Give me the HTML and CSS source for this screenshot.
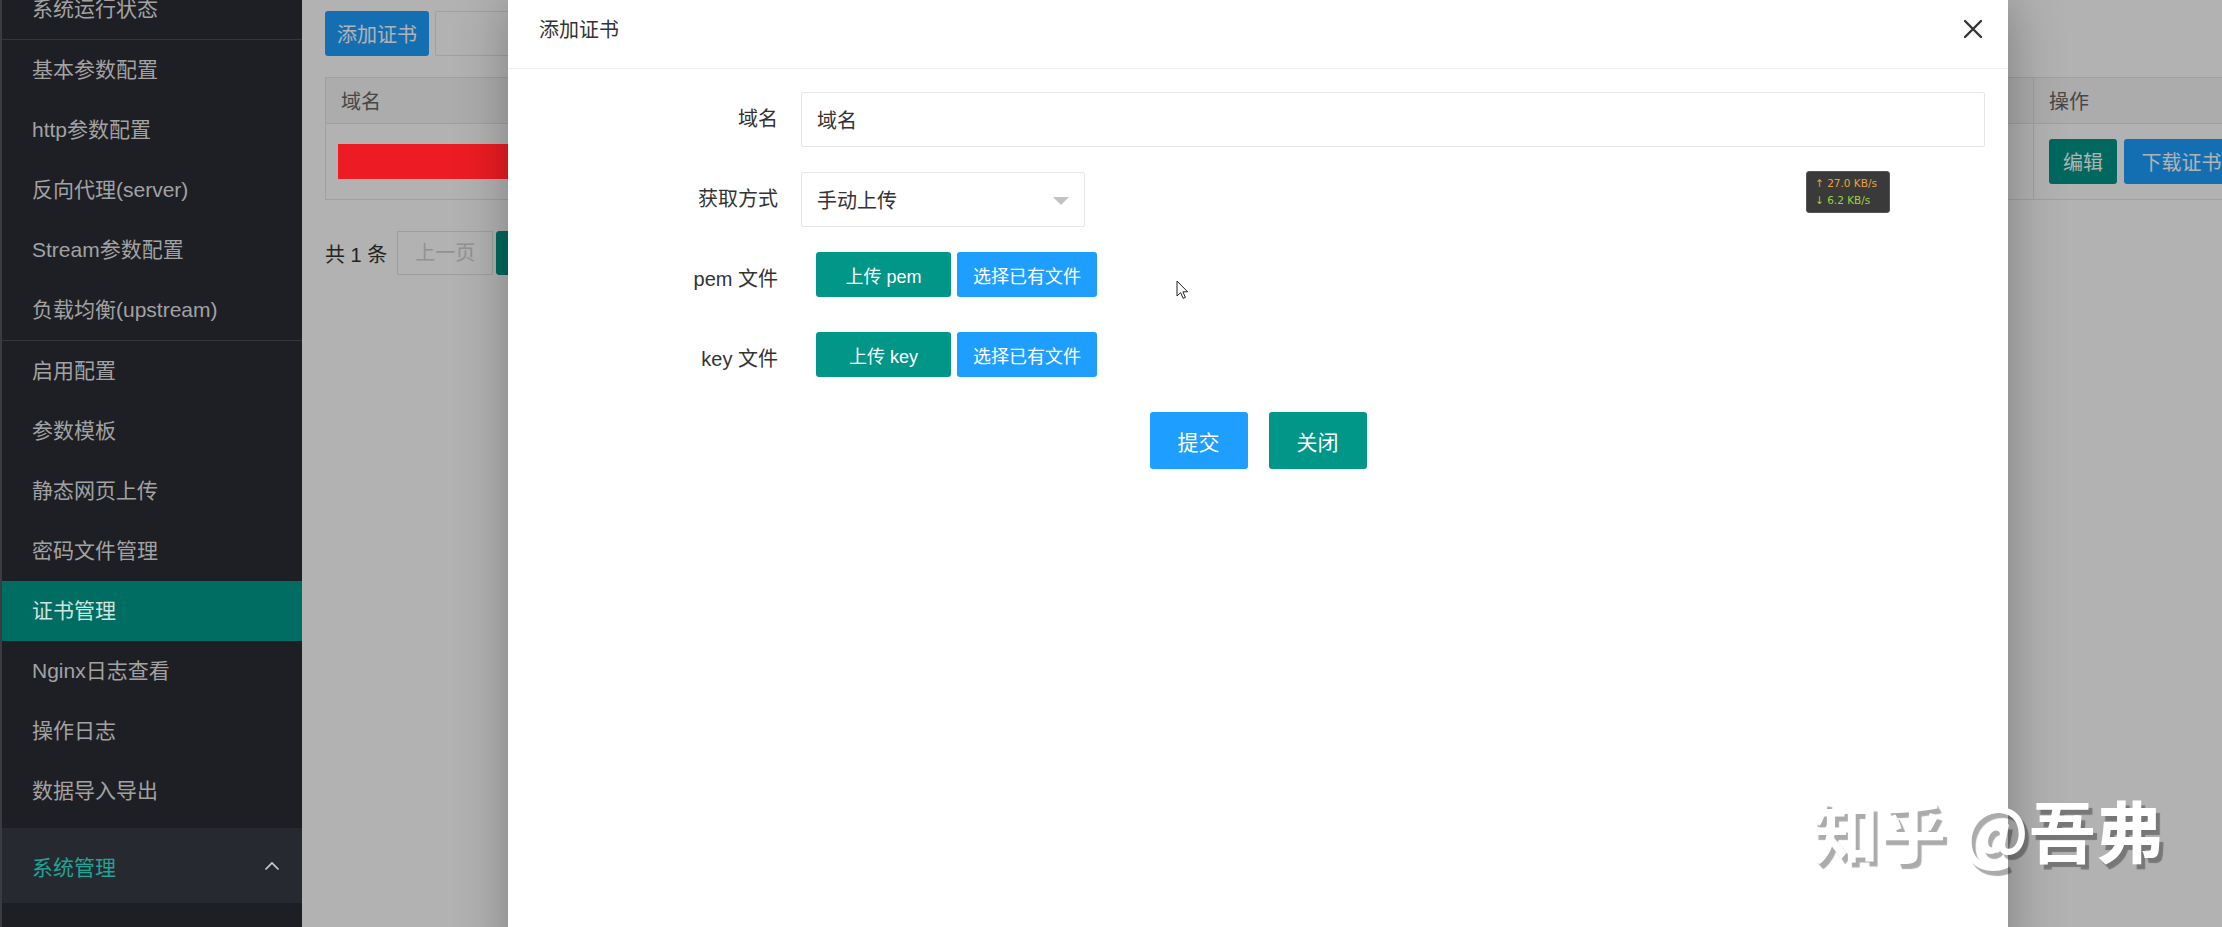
FILE: index.html
```html
<!DOCTYPE html>
<html lang="zh-CN">
<head>
  <meta charset="UTF-8">
  <meta name="viewport" content="width=device-width, initial-scale=1">
  <title>证书管理</title>
  <link rel="stylesheet" href="styles.css">
</head>
<body>

  <!-- 左侧菜单 -->
  <aside class="sidebar">
    <ul class="menu menu-top">
      <li><a href="#">系统运行状态</a></li>
    </ul>
    <ul class="menu">
      <li><a href="#">基本参数配置</a></li>
      <li><a href="#">http参数配置</a></li>
      <li><a href="#">反向代理(server)</a></li>
      <li><a href="#">Stream参数配置</a></li>
      <li><a href="#">负载均衡(upstream)</a></li>
    </ul>
    <ul class="menu menu-last">
      <li><a href="#">启用配置</a></li>
      <li><a href="#">参数模板</a></li>
      <li><a href="#">静态网页上传</a></li>
      <li><a href="#">密码文件管理</a></li>
      <li class="active"><a href="#">证书管理</a></li>
      <li><a href="#">Nginx日志查看</a></li>
      <li><a href="#">操作日志</a></li>
      <li><a href="#">数据导入导出</a></li>
    </ul>
    <div class="menu-group">
      <span>系统管理</span>
      <svg class="chevron" width="16" height="10" viewBox="0 0 16 10">
        <polyline points="1.5,8.5 8,2 14.5,8.5" fill="none" stroke="#cfcfcf" stroke-width="1.6"/>
      </svg>
    </div>
  </aside>

  <!-- 内容区 -->
  <main class="content">
    <div class="page">
      <div class="toolbar">
        <button class="btn btn-blue">添加证书</button>
        <div class="search-box"></div>
      </div>

      <table class="cert-table">
        <thead>
          <tr>
            <th>域名</th>
            <th class="col-op">操作</th>
          </tr>
        </thead>
        <tbody>
          <tr>
            <td><span class="masked"></span></td>
            <td class="col-op">
              <button class="btn btn-teal btn-sm">编辑</button>
              <button class="btn btn-blue btn-sm">下载证书</button>
            </td>
          </tr>
        </tbody>
      </table>

      <div class="pager">
        <span class="pager-count">共 1 条</span>
        <span class="pager-btn disabled">上一页</span>
        <span class="pager-btn current">1</span>
      </div>
    </div>

    <!-- 遮罩和弹窗 -->
    <div class="shade"></div>
    <div class="modal">
      <div class="modal-header">
        <span class="modal-title">添加证书</span>
        <svg class="modal-close" width="20" height="20" viewBox="0 0 20 20">
          <path d="M2 2 L18 18 M18 2 L2 18" stroke="#333" stroke-width="2.4" stroke-linecap="round"/>
        </svg>
      </div>
      <div class="modal-body">
        <div class="form-row">
          <label class="form-label">域名</label>
          <input class="form-input" type="text" value="域名">
        </div>
        <div class="form-row">
          <label class="form-label">获取方式</label>
          <div class="form-select">
            <span>手动上传</span>
            <i class="select-arrow"></i>
          </div>
        </div>
        <div class="form-row">
          <label class="form-label">pem 文件</label>
          <div class="upload-group">
            <button class="btn btn-teal btn-upload">上传 pem</button>
            <button class="btn btn-blue btn-pick">选择已有文件</button>
          </div>
        </div>
        <div class="form-row">
          <label class="form-label">key 文件</label>
          <div class="upload-group">
            <button class="btn btn-teal btn-upload">上传 key</button>
            <button class="btn btn-blue btn-pick">选择已有文件</button>
          </div>
        </div>
        <div class="form-footer">
          <button class="btn btn-blue btn-lg">提交</button>
          <button class="btn btn-teal btn-lg">关闭</button>
        </div>
      </div>
    </div>
  </main>

  <!-- 网速悬浮窗 -->
  <div class="net-speed">
    <div class="up">↑ 27.0 KB/s</div>
    <div class="down">↓ 6.2 KB/s</div>
  </div>

  <svg class="cursor" width="14" height="20" viewBox="0 0 14 20">
    <path d="M1 1 L1 16 L4.6 12.6 L7.2 18.4 L9.4 17.4 L6.9 11.8 L11.6 11.8 Z" fill="#fff" stroke="#222" stroke-width="1" stroke-linejoin="round"/>
  </svg>

  <div class="watermark">知乎 @吾弗</div>

</body>
</html>
```

FILE: styles.css
```css
/* 通用 */
body {
  margin: 0;
  display: flex;
  height: 100vh;
  overflow: hidden;
  position: relative;
  font-family: "Liberation Sans", "Noto Sans CJK SC", sans-serif;
  color: #333;
}

ul {
  list-style: none;
  margin: 0;
  padding: 0;
}

button {
  font-family: inherit;
  border: none;
  cursor: pointer;
}

/* 左侧菜单 */
.sidebar {
  width: 302px;
  flex-shrink: 0;
  background-color: #1e1f24;
  border-left: 2px solid #3b3c41;
  box-sizing: border-box;
}

.menu {
  border-bottom: 1px solid #34363c;
}

.menu-top {
  margin-top: -21px;
}

.menu-last {
  border-bottom: none;
  padding-bottom: 7px;
}

.menu li a {
  display: block;
  height: 60px;
  line-height: 60px;
  padding-left: 30px;
  font-size: 21px;
  color: #a2a2a2;
  text-decoration: none;
  white-space: nowrap;
}

.menu li.active a {
  background-color: #006d63;
  color: #cfe3df;
}

.menu-group {
  height: 75px;
  display: flex;
  align-items: center;
  justify-content: space-between;
  padding: 0 22px 0 30px;
  background-color: #272930;
  font-size: 21px;
  color: #1fa497;
}

/* 内容区 */
.content {
  flex: 1;
  position: relative;
  overflow: hidden;
  background-color: #fff;
}

.page {
  padding: 11px 0 0 23px;
}

.toolbar {
  display: flex;
  gap: 6px;
}

.btn {
  color: #fff;
  border-radius: 3px;
  font-size: 18px;
  padding: 0;
}

.btn-blue {
  background-color: #1e9fff;
}

.btn-teal {
  background-color: #009688;
}

.toolbar .btn {
  width: 104px;
  height: 45px;
  font-size: 20px;
}

.search-box {
  width: 300px;
  height: 43px;
  border: 1px solid #e6e6e6;
  border-radius: 2px;
}

/* 表格 */
.cert-table {
  width: 1980px;
  margin-top: 21px;
  border-collapse: collapse;
  border: 1px solid #e6e6e6;
  font-size: 20px;
}

.cert-table th {
  height: 45px;
  text-align: left;
  font-weight: normal;
  color: #666;
  padding: 0 15px;
  background-color: #f6f6f6;
  border-bottom: 1px solid #e6e6e6;
}

.cert-table td {
  height: 75px;
  padding: 0 15px;
}

.cert-table .col-op {
  width: 240px;
  border-left: 1px solid #e6e6e6;
  white-space: nowrap;
}

/* 打码块，盖在遮罩之上 */
.masked {
  display: block;
  position: relative;
  z-index: 1;
  width: 260px;
  height: 35px;
  margin-left: -3px;
  background-color: #ed1c24;
}

.btn-sm {
  height: 45px;
  font-size: 20px;
}

.btn-sm.btn-teal {
  width: 68px;
}

.btn-sm.btn-blue {
  width: 116px;
  margin-left: 1px;
}

/* 分页 */
.pager {
  display: flex;
  align-items: center;
  gap: 10px;
  margin-top: 31px;
  font-size: 20px;
}

.pager-btn {
  height: 42px;
  line-height: 42px;
  border: 1px solid #e2e2e2;
  text-align: center;
}

.pager-btn.disabled {
  width: 94px;
  color: #d2d2d2;
}

.pager-btn.current {
  width: 46px;
  margin-left: -7px;
  background-color: #009688;
  border-color: #009688;
  color: #fff;
  border-radius: 3px;
}

/* 遮罩 */
.shade {
  position: absolute;
  inset: 0;
  background-color: rgba(0, 0, 0, 0.3);
}

/* 弹窗 */
.modal {
  position: absolute;
  z-index: 2;
  left: 206px;
  top: 0;
  width: 1500px;
  bottom: -40px;
  background-color: #fff;
  box-shadow: 1px 1px 50px rgba(0, 0, 0, 0.3);
}

.modal-header {
  height: 69px;
  box-sizing: border-box;
  border-bottom: 1px solid #eee;
  display: flex;
  justify-content: space-between;
  align-items: flex-start;
  padding: 0 25px 0 31px;
}

.modal-title {
  line-height: 60px;
  font-size: 20px;
  color: #333;
}

.modal-close {
  margin-top: 19px;
}

.modal-body {
  padding-top: 23px;
  display: flex;
  flex-direction: column;
  gap: 25px;
}

.form-row {
  display: flex;
  align-items: flex-start;
}

.form-label {
  width: 270px;
  flex-shrink: 0;
  line-height: 55px;
  text-align: right;
  font-size: 20px;
  color: #333;
  margin-right: 23px;
}

.form-input {
  width: 1184px;
  height: 55px;
  box-sizing: border-box;
  border: 1px solid #e6e6e6;
  border-radius: 2px;
  padding: 0 15px;
  font-family: inherit;
  font-size: 20px;
  color: #333;
  outline: none;
}

.form-select {
  width: 284px;
  height: 55px;
  box-sizing: border-box;
  border: 1px solid #e6e6e6;
  border-radius: 2px;
  padding: 0 15px;
  display: flex;
  align-items: center;
  justify-content: space-between;
  font-size: 20px;
}

.select-arrow {
  width: 0;
  height: 0;
  border-left: 8px solid transparent;
  border-right: 8px solid transparent;
  border-top: 8px solid #c2c2c2;
  margin-top: 2px;
}

.upload-group {
  display: flex;
  gap: 6px;
  margin-left: 15px;
}

.upload-group .btn {
  height: 45px;
}

.btn-upload {
  width: 135px;
}

.btn-pick {
  width: 140px;
}

.form-footer {
  display: flex;
  justify-content: center;
  gap: 21px;
}

.btn-lg {
  width: 98px;
  height: 57px;
  font-size: 21px;
}

/* 网速悬浮窗 */
.net-speed {
  position: absolute;
  z-index: 3;
  left: 1806px;
  top: 171px;
  width: 84px;
  height: 42px;
  box-sizing: border-box;
  padding: 3px 0 0 8px;
  background-color: #3a3a3a;
  border: 1px solid #555;
  border-radius: 3px;
  font-family: "DejaVu Sans", sans-serif;
  font-size: 10.5px;
  line-height: 17px;
  white-space: nowrap;
}

.net-speed .up {
  color: #e9a33b;
}

.net-speed .down {
  color: #9fd13e;
}

.cursor {
  position: absolute;
  z-index: 3;
  left: 1176px;
  top: 280px;
}

/* 水印 */
.watermark {
  position: absolute;
  z-index: 3;
  left: 1812px;
  top: 780px;
  font-family: "Noto Sans CJK SC", sans-serif;
  font-weight: 700;
  font-size: 67px;
  color: #fff;
  text-shadow: 4px 5px 1px rgba(0, 0, 0, 0.33);
  white-space: nowrap;
}
```
